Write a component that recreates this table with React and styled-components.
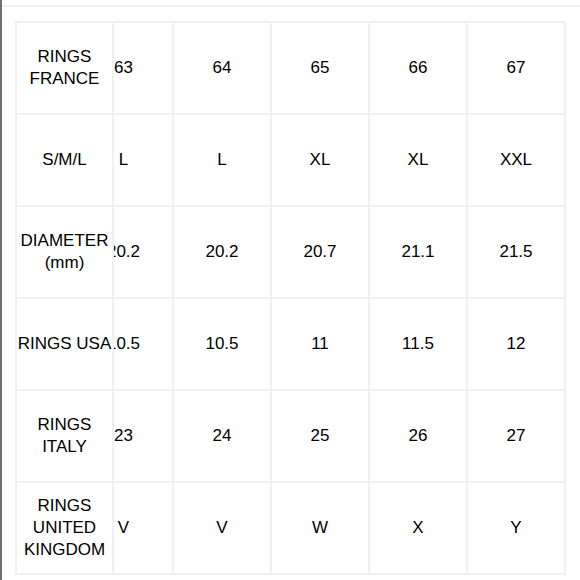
import React, { useLayoutEffect, useRef } from "react";
import styled, { createGlobalStyle } from "styled-components";

const GlobalStyle = createGlobalStyle`
  html, body {
    margin: 0;
    padding: 0;
    background: #fff;
  }
  body {
    font-family: "Liberation Sans", Arial, sans-serif;
    overflow: hidden;
  }
`;

const Page = styled.div`
  min-height: 100vh;
  box-sizing: border-box;
  border-left: 2px solid #707070;
  padding-top: 5px;
`;

const TopRule = styled.div`
  height: 2px;
  background: #f0f0f0;
`;

const Scroller = styled.div`
  margin: 14px 0 0 13px;
  width: 551px;
  overflow-x: auto;
  scrollbar-width: none;
  &::-webkit-scrollbar {
    display: none;
  }
`;

const Table = styled.table`
  border-collapse: separate;
  border-spacing: 0;
  table-layout: fixed;
  width: 590px;
  border-top: 2px solid #f0f0f0;
`;

const Cell = styled.td`
  box-sizing: content-box;
  width: ${({ $w }) => $w}px;
  height: 90px;
  padding: 0;
  text-align: center;
  vertical-align: middle;
  font-size: 17px;
  line-height: 22px;
  color: #000;
  background: #fff;
  border-right: 2px solid #f0f0f0;
  border-bottom: 2px solid #f0f0f0;
`;

const HeadCell = styled(Cell)`
  position: sticky;
  left: 0;
  z-index: 1;
  border-left: 2px solid #f0f0f0;
`;

const Line = styled.div`
  white-space: nowrap;
`;

const rows = [
  [["RINGS", "FRANCE"], "63", "64", "65", "66", "67"],
  [["S/M/L"], "L", "L", "XL", "XL", "XXL"],
  [["DIAMETER", "(mm)"], "20.2", "20.2", "20.7", "21.1", "21.5"],
  [["RINGS USA"], "10.5", "10.5", "11", "11.5", "12"],
  [["RINGS", "ITALY"], "23", "24", "25", "26", "27"],
  [["RINGS", "UNITED", "KINGDOM"], "V", "V", "W", "X", "Y"],
];

const widths = [97, 96, 96, 96, 96];

export default function App() {
  const ref = useRef(null);

  useLayoutEffect(() => {
    const el = ref.current;
    if (el) el.scrollLeft = el.scrollWidth;
  }, []);

  return (
    <Page>
      <GlobalStyle />
      <TopRule />
      <Scroller ref={ref}>
        <Table>
          <tbody>
            {rows.map(([label, ...values], i) => (
              <tr key={i}>
                <HeadCell $w={95}>
                  {label.map((line, j) => (
                    <Line key={j}>{line}</Line>
                  ))}
                </HeadCell>
                {values.map((v, j) => (
                  <Cell key={j} $w={widths[j]}>
                    {v}
                  </Cell>
                ))}
              </tr>
            ))}
          </tbody>
        </Table>
      </Scroller>
    </Page>
  );
}
